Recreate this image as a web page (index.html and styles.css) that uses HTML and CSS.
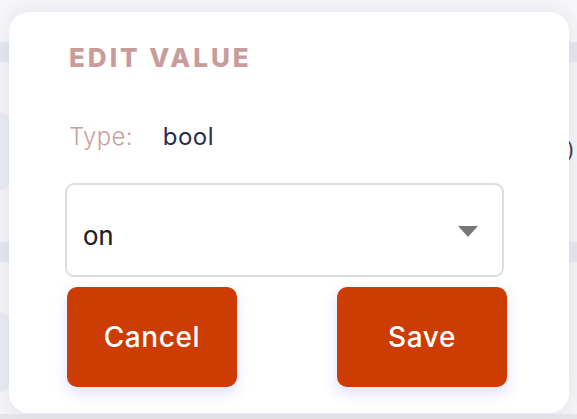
FILE: index.html
```html
<!DOCTYPE html>
<html lang="en">
<head>
  <meta charset="UTF-8">
  <title>Edit Value</title>
  <link rel="stylesheet" href="styles.css">
</head>
<body>

  <div class="backdrop">
    <div class="strip top"></div>
    <div class="strip band"></div>
    <div class="row">
      <div class="row-card"></div>
      <span class="row-end">)</span>
    </div>
    <div class="strip band"></div>
    <div class="row second">
      <div class="row-card"></div>
    </div>
    <div class="strip bottom"></div>
  </div>

  <div class="dialog">
    <h2>Edit Value</h2>

    <div class="type-line">
      <span class="type-label">Type:</span>
      <span class="type-value">bool</span>
    </div>

    <div class="select">
      <span class="select-text">on</span>
      <span class="select-arrow"></span>
    </div>

    <div class="actions">
      <button class="btn">Cancel</button>
      <button class="btn">Save</button>
    </div>
  </div>

</body>
</html>
```

FILE: styles.css
```css
body {
  margin: 0;
  padding: 0;
  width: 577px;
  height: 419px;
  overflow: hidden;
  background-color: #f7f7f9;
  font-family: 'Inter', 'Open Sans', sans-serif;
  position: relative;
}

.backdrop {
  display: flex;
  flex-direction: column;
  height: 419px;
}

.strip.top {
  height: 42px;
  background-color: #f8f8fa;
}

.strip.band {
  height: 20px;
  background-color: #e4e7ef;
}

.row {
  height: 180px;
  display: flex;
  align-items: flex-start;
  justify-content: space-between;
  background-color: #f6f6f8;
  padding-top: 50px;
  box-sizing: border-box;
}

.row.second {
  height: 152px;
}

.row-card {
  width: 40px;
  height: 78px;
  margin-left: -30px;
  border-radius: 10px;
  background-color: #e9ebf2;
}

.row.second .row-card {
  height: 80px;
}

.row-end {
  font-family: 'Roboto', sans-serif;
  font-size: 22px;
  line-height: 24px;
  color: #222;
  margin-right: 3px;
  margin-top: 26px;
}

.strip.bottom {
  flex: 1;
  background-color: #e6e6ea;
}

/* modal sits above the list */
.dialog {
  position: absolute;
  left: 9px;
  top: 12px;
  width: 560px;
  height: 401px;
  box-sizing: border-box;
  padding: 0 65px 0 56px;
  background-color: #ffffff;
  border-radius: 20px;
  box-shadow: 0 0 24px rgba(200, 200, 215, 0.45);
}

.dialog h2 {
  margin: 30px 0 0 4px;
  font-size: 26px;
  font-weight: 800;
  letter-spacing: 3px;
  text-transform: uppercase;
  color: #c99c9c;
  line-height: 32px;
}

.type-line {
  display: flex;
  gap: 30px;
  margin: 48px 0 0 4px;
  font-size: 24px;
  line-height: 30px;
}

.type-label {
  color: #c9a0a0;
  font-weight: 300;
  letter-spacing: 0.3px;
}

.type-value {
  color: #2b2b4d;
  font-weight: 400;
  letter-spacing: 0.5px;
}

.select {
  margin-top: 31px;
  height: 94px;
  box-sizing: border-box;
  border: 2px solid #dedede;
  border-radius: 9px;
  display: flex;
  align-items: center;
  justify-content: space-between;
  padding: 12px 24px 0 16px;
}

.select-text {
  font-family: 'Roboto', sans-serif;
  font-size: 27px;
  color: #222222;
}

.select-arrow {
  width: 0;
  height: 0;
  border-left: 10px solid transparent;
  border-right: 10px solid transparent;
  border-top: 11px solid #777777;
  margin-top: -10px;
}

.actions {
  display: flex;
  justify-content: space-between;
  margin: 10px -3px 0 2px;
}

.btn {
  width: 170px;
  height: 100px;
  border: none;
  border-radius: 10px;
  background-color: #cc3c03;
  color: #ffffff;
  font-family: 'Inter', 'Open Sans', sans-serif;
  font-size: 28px;
  font-weight: 500;
  letter-spacing: 0.6px;
  box-shadow: 0 6px 14px rgba(110, 110, 255, 0.22);
  cursor: pointer;
}
```
